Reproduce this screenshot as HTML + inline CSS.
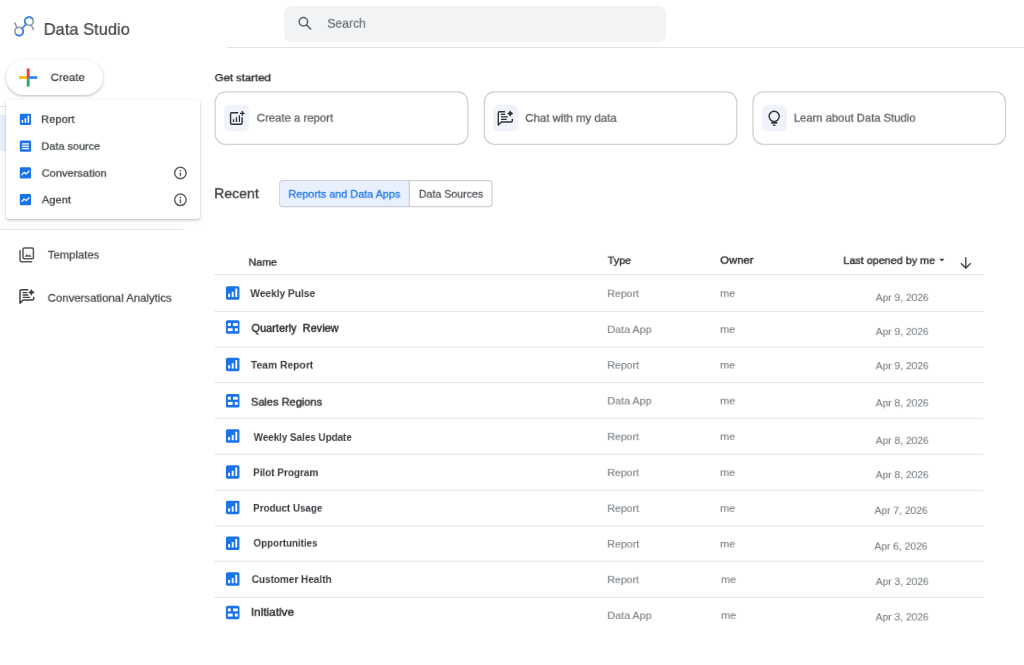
<!DOCTYPE html>
<html lang="en"><head><meta charset="utf-8"><title>Data Studio</title>
<style>
html,body{margin:0;padding:0;background:#fff;}
body{width:1024px;height:665px;position:relative;overflow:hidden;font-family:"Liberation Sans",sans-serif;}
#app{position:absolute;left:0;top:0;width:1024px;height:665px;overflow:hidden;}
.t{position:absolute;line-height:24px;height:24px;white-space:pre;transform-origin:0 50%;will-change:transform;}
#gfx{position:absolute;left:0;top:0;display:block;}
.abs{position:absolute;box-sizing:border-box;}
</style></head><body><div id="app">
<div class="abs" style="left:226.6px;top:47px;width:798px;height:1px;background:#e1e3e6"></div>
<div class="abs" style="left:284px;top:6px;width:382px;height:35.5px;border-radius:7px;background:#f1f3f4"></div>
<div class="abs" style="left:0;top:106.3px;width:6px;height:1px;background:#e0e2e5"></div>
<div class="abs" style="left:0;top:115px;width:6px;height:35.5px;background:#e8f0fe"></div>
<div class="abs" style="left:5.5px;top:59.5px;width:97.5px;height:35.5px;border-radius:18px;background:#fff;box-shadow:0 1px 2px rgba(60,64,67,.22),0 1px 3px 1px rgba(60,64,67,.1)"></div>
<div class="abs" style="left:6px;top:100px;width:194px;height:119px;border-radius:3px;background:#fff;box-shadow:0 1px 2px rgba(60,64,67,.28),0 2px 5px 1px rgba(60,64,67,.08)"></div>
<svg id="gfx" width="1024" height="665" viewBox="0 0 1024 665">
<g fill="none" stroke="#e1e3e6" stroke-width="1"><path d="M214.6 274.55 H983.7"/><path d="M214.6 311.40 H983.7"/><path d="M214.6 347.00 H983.7"/><path d="M214.6 382.60 H983.7"/><path d="M214.6 418.30 H983.7"/><path d="M214.6 454.30 H983.7"/><path d="M214.6 490.30 H983.7"/><path d="M214.6 525.80 H983.7"/><path d="M214.6 561.20 H983.7"/><path d="M214.6 597.40 H983.7"/></g>
<g><rect x="215.15" y="91.85" width="252.7" height="52.45" rx="10.3" fill="#fff" stroke="#d2d2d4" stroke-width="1.3"/>
<rect x="484.25" y="91.85" width="252.55" height="52.45" rx="10.3" fill="#fff" stroke="#d2d2d4" stroke-width="1.3"/>
<rect x="753.0" y="91.85" width="252.5" height="52.45" rx="10.3" fill="#fff" stroke="#d2d2d4" stroke-width="1.3"/></g>
<rect x="223.95" y="104.9" width="25.1" height="26.3" rx="5.6" fill="#f0f3f9"/><rect x="493.0" y="104.9" width="25.1" height="26.3" rx="5.6" fill="#f0f3f9"/><rect x="761.9" y="104.9" width="25.1" height="26.3" rx="5.6" fill="#f0f3f9"/>
<g transform="translate(297.000 15.400)"><circle cx="6.4" cy="6.4" r="4.2" fill="none" stroke="#5f6368" stroke-width="1.5"/><path d="M9.6 9.6 L13.6 13.6" stroke="#5f6368" stroke-width="1.7" stroke-linecap="round"/></g>
<g transform="translate(12.000 14.000)"><path d="M2.8 9.1 L4.9 13.6" stroke="#9aa0a6" stroke-width="1.7" stroke-linecap="round" fill="none"/>
<path d="M19.2 11.0 L21.4 15.3" stroke="#9aa0a6" stroke-width="1.7" stroke-linecap="round" fill="none"/>
<circle cx="7.07" cy="17.46" r="4.2" fill="none" stroke="#9aa0a6" stroke-width="1.75"/>
<circle cx="17.03" cy="7.26" r="4.2" fill="none" stroke="#9aa0a6" stroke-width="1.75"/>
<path d="M10.04 14.49 A4.2 4.2 0 1 1 3.85 20.16" fill="none" stroke="#4285f4" stroke-width="1.75"/>
<path d="M14.06 10.23 A4.2 4.2 0 1 1 20.84 5.49" fill="none" stroke="#4285f4" stroke-width="1.75"/>
<path d="M9.9 14.6 L14.2 10.1" stroke="#4285f4" stroke-width="1.75" stroke-linecap="round" fill="none"/></g>
<g><path d="M0 229.4 H183.5" stroke="#e0e1e3" stroke-width="1" fill="none"/></g>
<g><rect x="26.72" y="68.5" width="2.9" height="9.05" fill="#ea4335"/>
<rect x="26.72" y="77.55" width="2.9" height="9.05" fill="#34a853"/>
<rect x="19.14" y="76.1" width="9.03" height="2.9" fill="#fbbc04"/>
<rect x="28.17" y="76.1" width="9.03" height="2.9" fill="#4285f4"/>
<path d="M26.72 76.1 H29.62 L26.72 79 Z" fill="#ea4335"/></g>
<g transform="translate(18.000 246.000)"><path d="M2.05 4.6 V14.2 Q2.05 15.65 3.5 15.65 H13.6" fill="none" stroke="#54575b" stroke-width="1.5" stroke-linecap="round"/>
<rect x="5.0" y="1.95" width="10.4" height="10.9" rx="1.3" fill="none" stroke="#54575b" stroke-width="1.5"/>
<path d="M6.6 10.7 L8.9 8.0 L10.3 9.7 L11.5 8.5 L13.8 10.7 Z" fill="#54575b"/></g>
<g transform="translate(18.000 288.000)"><path d="M10.2 1.75 H3.3 Q2.05 1.75 2.05 3 V15.2 L5.2 12.05 H14.4 Q15.65 12.05 15.65 10.8 V8.8" fill="none" stroke="#3c4043" stroke-width="1.5" stroke-linejoin="round"/>
<path d="M4.6 4.6 H9.4 M4.6 7 H10.4 M4.6 9.4 H12.2" stroke="#3c4043" stroke-width="1.35" fill="none"/>
<path d="M13.4 0.9 Q14.2 3.5 16.8 4.3 Q14.2 5.1 13.4 7.7 Q12.6 5.1 10 4.3 Q12.6 3.5 13.4 0.9 Z" fill="#3c4043"/></g>
<g transform="translate(228.000 109.500)"><path d="M10.2 3.18 H3.8 Q2.57 3.18 2.57 4.4 V13.6 Q2.57 14.8 3.8 14.8 H12.9 Q14.1 14.8 14.1 13.6 V7.8" fill="none" stroke="#303134" stroke-width="1.4"/>
<path d="M5.5 12.4 V9.7 M8.4 12.4 V7.8 M11.4 12.4 V5.8" stroke="#303134" stroke-width="1.3" fill="none"/>
<path d="M14.4 1.5 V6.2 M12.05 3.86 H16.75" stroke="#303134" stroke-width="1.4" fill="none"/></g>
<g transform="translate(496.500 109.500)"><path d="M8.6 2.2 H3 Q1.8 2.2 1.8 3.4 V15.6 L4.9 12.5 H14.6 Q15.8 12.5 15.8 11.3 V9.3" fill="none" stroke="#303134" stroke-width="1.4" stroke-linejoin="round"/>
<path d="M4.5 4.9 H8.6 M4.5 7.35 H11.3 M4.5 9.8 H10.1" stroke="#303134" stroke-width="1.3" fill="none"/>
<path d="M13.7 0.8 Q14.5 3.2 16.9 4 Q14.5 4.8 13.7 7.2 Q12.9 4.8 10.5 4 Q12.9 3.2 13.7 0.8 Z" fill="#303134"/></g>
<g transform="translate(765.500 109.500)"><circle cx="8.66" cy="6.87" r="5.05" fill="none" stroke="#303134" stroke-width="1.4"/>
<rect x="5.7" y="12.45" width="6" height="1.7" fill="#303134"/>
<rect x="7.2" y="14.95" width="2.9" height="1.4" rx="0.5" fill="#303134"/></g>
<g><rect x="279.75" y="180.55" width="212.2" height="26.1" rx="3" fill="#fff" stroke="#cbced3" stroke-width="1.2"/>
<path d="M283 181.15 H409.4 V206.05 H283 Q280.35 206.05 280.35 203.4 V183.8 Q280.35 181.15 283 181.15 Z" fill="#e8f0fe"/>
<path d="M409.4 180.55 V206.65" stroke="#cbced3" stroke-width="1.2" fill="none"/></g>
<g transform="translate(938.400 258.000)"><path d="M0.9 0.8 H6.1 L3.5 3.6 Z" fill="#3c4043"/></g>
<g transform="translate(959.300 256.000)"><path d="M6.5 1.2 V11.8 M1.6 7.2 L6.5 12.1 L11.4 7.2" fill="none" stroke="#4a4d51" stroke-width="1.45"/></g>
<g transform="translate(19.800 113.650) scale(0.80357 0.80357)"><rect x="0" y="0" width="14" height="14" rx="1.7" fill="#1a73e8"/><rect x="2.3" y="7.9" width="2" height="3.4" fill="#fff"/><rect x="6.0" y="5.8" width="2" height="5.5" fill="#fff"/><rect x="9.7" y="2.5" width="2" height="8.8" fill="#fff"/></g>
<g transform="translate(19.800 140.600) scale(0.80357 0.80357)"><rect x="0" y="0" width="14" height="14" rx="1.7" fill="#1a73e8"/><rect x="2.6" y="3.3" width="8.8" height="1.6" fill="#fff"/><rect x="2.6" y="6.2" width="8.8" height="1.6" fill="#fff"/><rect x="2.6" y="9.1" width="8.8" height="1.6" fill="#fff"/></g>
<g transform="translate(19.800 167.350) scale(0.80357 0.80357)"><rect x="0" y="0" width="14" height="14" rx="1.7" fill="#1a73e8"/><path d="M2.4 9.4 L5.4 6.2 L7.8 8.2 L11.6 4.6" fill="none" stroke="#fff" stroke-width="1.5" stroke-linejoin="round" stroke-linecap="round"/></g>
<g transform="translate(19.800 194.050) scale(0.80357 0.80357)"><rect x="0" y="0" width="14" height="14" rx="1.7" fill="#1a73e8"/><path d="M2.4 9.4 L5.4 6.2 L7.8 8.2 L11.6 4.6" fill="none" stroke="#fff" stroke-width="1.5" stroke-linejoin="round" stroke-linecap="round"/></g>
<g transform="translate(172.900 165.500)"><circle cx="7.5" cy="7.5" r="5.75" fill="none" stroke="#5b5f63" stroke-width="1.45"/><rect x="6.8" y="6.9" width="1.4" height="3.9" fill="#5b5f63"/><rect x="6.8" y="4.5" width="1.4" height="1.4" fill="#5b5f63"/></g>
<g transform="translate(172.900 192.300)"><circle cx="7.5" cy="7.5" r="5.75" fill="none" stroke="#5b5f63" stroke-width="1.45"/><rect x="6.8" y="6.9" width="1.4" height="3.9" fill="#5b5f63"/><rect x="6.8" y="4.5" width="1.4" height="1.4" fill="#5b5f63"/></g>
<g transform="translate(225.950 286.150) scale(0.96429 0.96429)"><rect x="0" y="0" width="14" height="14" rx="1.7" fill="#1a73e8"/><rect x="2.3" y="7.9" width="2" height="3.4" fill="#fff"/><rect x="6.0" y="5.8" width="2" height="5.5" fill="#fff"/><rect x="9.7" y="2.5" width="2" height="8.8" fill="#fff"/></g>
<g transform="translate(225.950 320.350) scale(0.96429 0.96429)"><rect x="0" y="0" width="14" height="14" rx="1.7" fill="#1a73e8"/><rect x="2.0" y="2.8" width="3.0" height="3.0" fill="#fff"/><rect x="7.3" y="2.8" width="4.9" height="3.0" fill="#fff"/><rect x="2.0" y="8.2" width="4.9" height="3.0" fill="#fff"/><rect x="9.2" y="8.2" width="3.0" height="3.0" fill="#fff"/></g>
<g transform="translate(225.950 357.650) scale(0.96429 0.96429)"><rect x="0" y="0" width="14" height="14" rx="1.7" fill="#1a73e8"/><rect x="2.3" y="7.9" width="2" height="3.4" fill="#fff"/><rect x="6.0" y="5.8" width="2" height="5.5" fill="#fff"/><rect x="9.7" y="2.5" width="2" height="8.8" fill="#fff"/></g>
<g transform="translate(225.950 394.050) scale(0.96429 0.96429)"><rect x="0" y="0" width="14" height="14" rx="1.7" fill="#1a73e8"/><rect x="2.0" y="2.8" width="3.0" height="3.0" fill="#fff"/><rect x="7.3" y="2.8" width="4.9" height="3.0" fill="#fff"/><rect x="2.0" y="8.2" width="4.9" height="3.0" fill="#fff"/><rect x="9.2" y="8.2" width="3.0" height="3.0" fill="#fff"/></g>
<g transform="translate(225.950 429.350) scale(0.96429 0.96429)"><rect x="0" y="0" width="14" height="14" rx="1.7" fill="#1a73e8"/><rect x="2.3" y="7.9" width="2" height="3.4" fill="#fff"/><rect x="6.0" y="5.8" width="2" height="5.5" fill="#fff"/><rect x="9.7" y="2.5" width="2" height="8.8" fill="#fff"/></g>
<g transform="translate(225.950 465.150) scale(0.96429 0.96429)"><rect x="0" y="0" width="14" height="14" rx="1.7" fill="#1a73e8"/><rect x="2.3" y="7.9" width="2" height="3.4" fill="#fff"/><rect x="6.0" y="5.8" width="2" height="5.5" fill="#fff"/><rect x="9.7" y="2.5" width="2" height="8.8" fill="#fff"/></g>
<g transform="translate(225.950 500.750) scale(0.96429 0.96429)"><rect x="0" y="0" width="14" height="14" rx="1.7" fill="#1a73e8"/><rect x="2.3" y="7.9" width="2" height="3.4" fill="#fff"/><rect x="6.0" y="5.8" width="2" height="5.5" fill="#fff"/><rect x="9.7" y="2.5" width="2" height="8.8" fill="#fff"/></g>
<g transform="translate(225.950 536.550) scale(0.96429 0.96429)"><rect x="0" y="0" width="14" height="14" rx="1.7" fill="#1a73e8"/><rect x="2.3" y="7.9" width="2" height="3.4" fill="#fff"/><rect x="6.0" y="5.8" width="2" height="5.5" fill="#fff"/><rect x="9.7" y="2.5" width="2" height="8.8" fill="#fff"/></g>
<g transform="translate(225.950 572.350) scale(0.96429 0.96429)"><rect x="0" y="0" width="14" height="14" rx="1.7" fill="#1a73e8"/><rect x="2.3" y="7.9" width="2" height="3.4" fill="#fff"/><rect x="6.0" y="5.8" width="2" height="5.5" fill="#fff"/><rect x="9.7" y="2.5" width="2" height="8.8" fill="#fff"/></g>
<g transform="translate(225.950 605.750) scale(0.96429 0.96429)"><rect x="0" y="0" width="14" height="14" rx="1.7" fill="#1a73e8"/><rect x="2.0" y="2.8" width="3.0" height="3.0" fill="#fff"/><rect x="7.3" y="2.8" width="4.9" height="3.0" fill="#fff"/><rect x="2.0" y="8.2" width="4.9" height="3.0" fill="#fff"/><rect x="9.2" y="8.2" width="3.0" height="3.0" fill="#fff"/></g>
</svg>
<span class="t" style="left:43px;top:17px;font-size:18.5px;color:#3c4043;-webkit-text-stroke:0.17px #3c4043;transform:translate(0.71px,0.43px) scale(0.8902,0.9038);">Data Studio</span>
<span class="t" style="left:327px;top:11px;font-size:14.75px;color:#5f6368;-webkit-text-stroke:0.12px #5f6368;transform:translate(0.42px,0.27px) scale(0.8219,0.8800);">Search</span>
<span class="t" style="left:50px;top:65px;font-size:12.75px;color:#3c4043;-webkit-text-stroke:0.29px #3c4043;transform:translate(0.68px,0.72px) scale(0.8894,0.8056);">Create</span>
<span class="t" style="left:41px;top:107px;font-size:12.75px;color:#3c4043;-webkit-text-stroke:0.30px #3c4043;transform:translate(0.00px,0.57px) scale(0.8780,0.7944);">Report</span>
<span class="t" style="left:41px;top:134px;font-size:11.5px;color:#3c4043;-webkit-text-stroke:0.27px #3c4043;transform:translate(0.40px,0.10px) scale(0.9469,0.8938);">Data source</span>
<span class="t" style="left:41px;top:161px;font-size:11.5px;color:#3c4043;-webkit-text-stroke:0.27px #3c4043;transform:translate(0.71px,0.04px) scale(0.9608,0.8938);">Conversation</span>
<span class="t" style="left:41px;top:188px;font-size:12.75px;color:#3c4043;-webkit-text-stroke:0.30px #3c4043;transform:translate(0.76px,0.16px) scale(0.8766,0.7944);">Agent</span>
<span class="t" style="left:47px;top:243px;font-size:12.75px;color:#474a4d;-webkit-text-stroke:0.29px #474a4d;transform:translate(0.80px,0.13px) scale(0.8845,0.8500);">Templates</span>
<span class="t" style="left:47px;top:286px;font-size:12.75px;color:#474a4d;-webkit-text-stroke:0.29px #474a4d;transform:translate(0.68px,0.23px) scale(0.8925,0.8500);">Conversational Analytics</span>
<span class="t" style="left:214px;top:66px;font-size:12.75px;color:#303336;-webkit-text-stroke:0.47px #303336;transform:translate(0.69px,0.05px) scale(0.8878,0.8000);">Get started</span>
<span class="t" style="left:256px;top:106px;font-size:12.75px;color:#5f6368;-webkit-text-stroke:0.34px #5f6368;transform:translate(0.72px,0.13px) scale(0.8908,0.8667);">Create a report</span>
<span class="t" style="left:525px;top:106px;font-size:12.75px;color:#5f6368;-webkit-text-stroke:0.34px #5f6368;transform:translate(0.25px,0.25px) scale(0.8950,0.8667);">Chat with my data</span>
<span class="t" style="left:793px;top:106px;font-size:12.75px;color:#5f6368;-webkit-text-stroke:0.34px #5f6368;transform:translate(0.75px,0.14px) scale(0.8804,0.8667);">Learn about Data Studio</span>
<span class="t" style="left:214px;top:181px;font-size:16.5px;color:#3c4043;-webkit-text-stroke:0.36px #3c4043;transform:translate(0.16px,0.28px) scale(0.8523,0.8250);">Recent</span>
<span class="t" style="left:288px;top:181px;font-size:11.5px;color:#1a73e8;-webkit-text-stroke:0.26px #1a73e8;transform:translate(0.43px,0.82px) scale(0.9403,0.9437);">Reports and Data Apps</span>
<span class="t" style="left:418px;top:181px;font-size:11.5px;color:#4d5156;-webkit-text-stroke:0.27px #4d5156;transform:translate(0.84px,0.79px) scale(0.9220,0.9437);">Data Sources</span>
<span class="t" style="left:248px;top:250px;font-size:11.5px;color:#303336;-webkit-text-stroke:0.43px #303336;transform:translate(0.59px,0.06px) scale(0.9249,0.8875);">Name</span>
<span class="t" style="left:607px;top:248px;font-size:11.5px;color:#303336;-webkit-text-stroke:0.43px #303336;transform:translate(0.64px,0.27px) scale(0.9426,0.9000);">Type</span>
<span class="t" style="left:720px;top:248px;font-size:12.75px;color:#303336;-webkit-text-stroke:0.47px #303336;transform:translate(0.22px,0.44px) scale(0.8831,0.8000);">Owner</span>
<span class="t" style="left:843px;top:248px;font-size:11.5px;color:#303336;-webkit-text-stroke:0.43px #303336;transform:translate(0.36px,0.29px) scale(0.9373,0.9000);">Last opened by me</span>
<span class="t" style="left:250px;top:281px;font-size:11.5px;color:#393c40;font-weight:700;transform:translate(0.39px,0.11px) scale(0.8830,0.9625);">Weekly Pulse</span>
<span class="t" style="left:607px;top:281px;font-size:11.5px;color:#7c8186;-webkit-text-stroke:0.13px #7c8186;transform:translate(0.41px,0.39px) scale(0.9122,0.9225);">Report</span>
<span class="t" style="left:720px;top:281px;font-size:11.5px;color:#7c8186;-webkit-text-stroke:0.13px #7c8186;transform:translate(0.10px,0.14px) scale(0.9446,0.9225);">me</span>
<span class="t" style="left:875px;top:285px;font-size:11.5px;color:#7c8186;-webkit-text-stroke:0.13px #7c8186;transform:translate(0.71px,0.35px) scale(0.8902,0.9100);">Apr 9, 2026</span>
<span class="t" style="left:251px;top:316px;font-size:12.75px;color:#26282b;-webkit-text-stroke:0.44px #26282b;transform:translate(0.49px,0.26px) scale(0.8600,0.8800);">Quarterly  Review</span>
<span class="t" style="left:607px;top:317px;font-size:11.5px;color:#7c8186;-webkit-text-stroke:0.13px #7c8186;transform:translate(0.32px,0.33px) scale(0.9364,0.9225);">Data App</span>
<span class="t" style="left:720px;top:317px;font-size:11.5px;color:#7c8186;-webkit-text-stroke:0.13px #7c8186;transform:translate(0.10px,0.14px) scale(0.9446,0.9225);">me</span>
<span class="t" style="left:875px;top:319px;font-size:11.5px;color:#7c8186;-webkit-text-stroke:0.13px #7c8186;transform:translate(0.69px,0.45px) scale(0.8904,0.9100);">Apr 9, 2026</span>
<span class="t" style="left:250px;top:352px;font-size:11.5px;color:#393c40;font-weight:700;transform:translate(0.84px,0.69px) scale(0.8991,0.9625);">Team Report</span>
<span class="t" style="left:607px;top:352px;font-size:11.5px;color:#7c8186;-webkit-text-stroke:0.13px #7c8186;transform:translate(0.33px,0.93px) scale(0.9185,0.9225);">Report</span>
<span class="t" style="left:720px;top:352px;font-size:11.5px;color:#7c8186;-webkit-text-stroke:0.13px #7c8186;transform:translate(0.09px,0.81px) scale(0.9448,0.9225);">me</span>
<span class="t" style="left:875px;top:353px;font-size:11.5px;color:#7c8186;-webkit-text-stroke:0.13px #7c8186;transform:translate(0.68px,0.59px) scale(0.8909,0.9100);">Apr 9, 2026</span>
<span class="t" style="left:250px;top:389px;font-size:11.5px;color:#26282b;-webkit-text-stroke:0.36px #26282b;transform:translate(0.94px,0.70px) scale(0.9590,0.9688);">Sales Regions</span>
<span class="t" style="left:607px;top:388px;font-size:11.5px;color:#7c8186;-webkit-text-stroke:0.13px #7c8186;transform:translate(0.39px,0.67px) scale(0.9343,0.9225);">Data App</span>
<span class="t" style="left:720px;top:388px;font-size:11.5px;color:#7c8186;-webkit-text-stroke:0.13px #7c8186;transform:translate(0.12px,0.59px) scale(0.9495,0.9225);">me</span>
<span class="t" style="left:875px;top:390px;font-size:11.5px;color:#7c8186;-webkit-text-stroke:0.13px #7c8186;transform:translate(0.64px,0.82px) scale(0.8913,0.9100);">Apr 8, 2026</span>
<span class="t" style="left:253px;top:424px;font-size:11.5px;color:#393c40;font-weight:700;transform:translate(0.71px,0.99px) scale(0.8540,0.9625);">Weekly Sales Update</span>
<span class="t" style="left:607px;top:424px;font-size:11.5px;color:#7c8186;-webkit-text-stroke:0.13px #7c8186;transform:translate(0.41px,0.47px) scale(0.9131,0.9225);">Report</span>
<span class="t" style="left:720px;top:424px;font-size:11.5px;color:#7c8186;-webkit-text-stroke:0.13px #7c8186;transform:translate(0.09px,0.34px) scale(0.9474,0.9225);">me</span>
<span class="t" style="left:875px;top:428px;font-size:11.5px;color:#7c8186;-webkit-text-stroke:0.13px #7c8186;transform:translate(0.71px,0.35px) scale(0.8902,0.9100);">Apr 8, 2026</span>
<span class="t" style="left:253px;top:460px;font-size:11.5px;color:#393c40;font-weight:700;transform:translate(0.11px,0.27px) scale(0.8634,0.9625);">Pilot Program</span>
<span class="t" style="left:607px;top:460px;font-size:11.5px;color:#7c8186;-webkit-text-stroke:0.13px #7c8186;transform:translate(0.41px,0.47px) scale(0.9131,0.9225);">Report</span>
<span class="t" style="left:720px;top:460px;font-size:11.5px;color:#7c8186;-webkit-text-stroke:0.13px #7c8186;transform:translate(0.09px,0.34px) scale(0.9474,0.9225);">me</span>
<span class="t" style="left:875px;top:462px;font-size:11.5px;color:#7c8186;-webkit-text-stroke:0.13px #7c8186;transform:translate(0.69px,0.56px) scale(0.8906,0.9100);">Apr 8, 2026</span>
<span class="t" style="left:253px;top:495px;font-size:11.5px;color:#393c40;font-weight:700;transform:translate(0.12px,0.76px) scale(0.8536,0.9625);">Product Usage</span>
<span class="t" style="left:607px;top:496px;font-size:11.5px;color:#7c8186;-webkit-text-stroke:0.13px #7c8186;transform:translate(0.40px,0.20px) scale(0.9145,0.9225);">Report</span>
<span class="t" style="left:720px;top:496px;font-size:11.5px;color:#7c8186;-webkit-text-stroke:0.13px #7c8186;transform:translate(0.05px,0.07px) scale(0.9487,0.9225);">me</span>
<span class="t" style="left:874px;top:498px;font-size:11.5px;color:#7c8186;-webkit-text-stroke:0.13px #7c8186;transform:translate(0.50px,0.26px) scale(0.8935,0.9100);">Apr 7, 2026</span>
<span class="t" style="left:253px;top:530px;font-size:11.5px;color:#393c40;font-weight:700;transform:translate(0.53px,0.73px) scale(0.8487,0.9625);">Opportunities</span>
<span class="t" style="left:607px;top:531px;font-size:11.5px;color:#7c8186;-webkit-text-stroke:0.13px #7c8186;transform:translate(0.34px,0.77px) scale(0.9249,0.9225);">Report</span>
<span class="t" style="left:720px;top:531px;font-size:11.5px;color:#7c8186;-webkit-text-stroke:0.13px #7c8186;transform:translate(0.10px,0.69px) scale(0.9514,0.9225);">me</span>
<span class="t" style="left:874px;top:534px;font-size:11.5px;color:#7c8186;-webkit-text-stroke:0.13px #7c8186;transform:translate(0.38px,0.07px) scale(0.8920,0.9100);">Apr 6, 2026</span>
<span class="t" style="left:251px;top:567px;font-size:11.5px;color:#393c40;font-weight:700;transform:translate(0.74px,0.05px) scale(0.8677,0.9625);">Customer Health</span>
<span class="t" style="left:607px;top:567px;font-size:11.5px;color:#7c8186;-webkit-text-stroke:0.13px #7c8186;transform:translate(0.41px,0.47px) scale(0.9131,0.9225);">Report</span>
<span class="t" style="left:721px;top:567px;font-size:11.5px;color:#7c8186;-webkit-text-stroke:0.13px #7c8186;transform:translate(0.09px,0.34px) scale(0.9474,0.9225);">me</span>
<span class="t" style="left:875px;top:569px;font-size:11.5px;color:#7c8186;-webkit-text-stroke:0.13px #7c8186;transform:translate(0.71px,0.35px) scale(0.8902,0.9100);">Apr 3, 2026</span>
<span class="t" style="left:250px;top:600px;font-size:12.75px;color:#26282b;-webkit-text-stroke:0.44px #26282b;transform:translate(0.76px,0.29px) scale(0.9253,0.8611);">Initiative</span>
<span class="t" style="left:607px;top:603px;font-size:11.5px;color:#7c8186;-webkit-text-stroke:0.13px #7c8186;transform:translate(0.32px,0.33px) scale(0.9364,0.9225);">Data App</span>
<span class="t" style="left:721px;top:603px;font-size:11.5px;color:#7c8186;-webkit-text-stroke:0.13px #7c8186;transform:translate(0.10px,0.14px) scale(0.9446,0.9225);">me</span>
<span class="t" style="left:875px;top:604px;font-size:11.5px;color:#7c8186;-webkit-text-stroke:0.13px #7c8186;transform:translate(0.63px,0.82px) scale(0.8917,0.9100);">Apr 3, 2026</span>
</div></body></html>
